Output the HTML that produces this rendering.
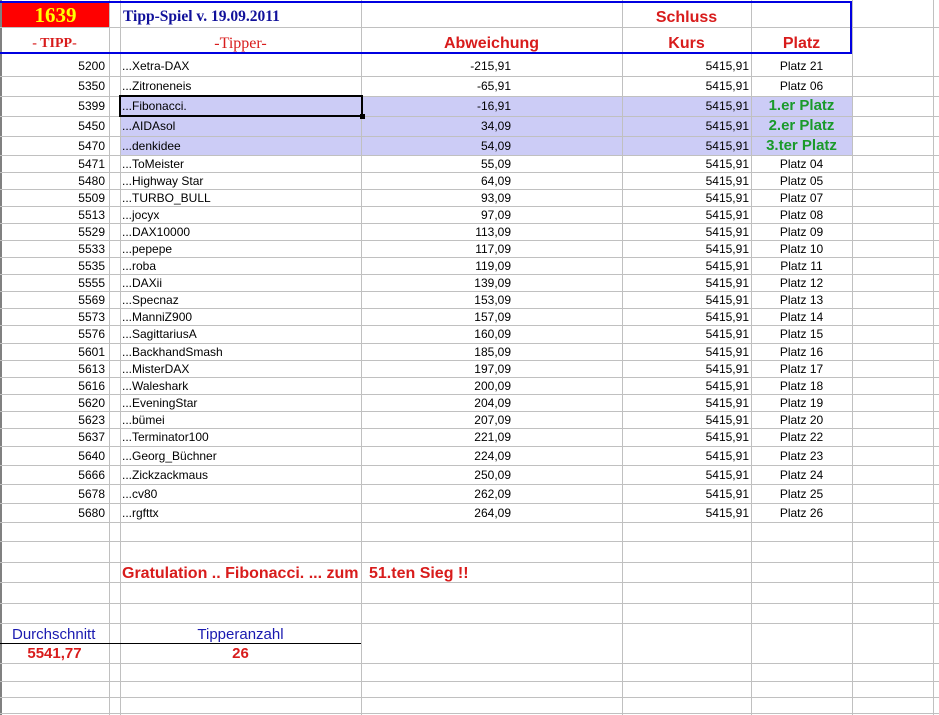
<!DOCTYPE html>
<html><head><meta charset="utf-8"><style>
body{margin:0;width:939px;height:715px;overflow:hidden;background:#fff;position:relative;font-family:"Liberation Sans",Arial,sans-serif;font-size:12px;color:#000}
.v{position:absolute;top:0;height:715px;width:1px;background:#c0c0c0}
.h{position:absolute;left:0;width:939px;height:1px;background:#c0c0c0}
.t{position:absolute;white-space:nowrap}
.a{text-align:right;width:105px;left:0}
.n{left:122px}
.d{text-align:right;width:100px;left:411px}
.k{text-align:right;width:100px;left:649px}
.p{text-align:center;width:101px;left:751px}
.g{color:#1a9a2a;font-weight:bold;font-size:15px}
.red{color:#d81c1c;font-weight:bold}
</style></head><body>
<div style="position:absolute;left:120px;top:96px;width:732px;height:59px;background:#ccccf6"></div>
<div class="v" style="left:109px"></div><div class="v" style="left:120px"></div><div class="v" style="left:361px"></div><div class="v" style="left:622px"></div><div class="v" style="left:751px"></div><div class="v" style="left:852px"></div><div class="v" style="left:933px"></div>
<div style="position:absolute;left:0;top:0;width:2px;height:715px;background:#808080"></div>
<div class="h" style="top:27px"></div>
<div class="h" style="top:76px"></div><div class="h" style="top:96px"></div><div class="h" style="top:116px"></div><div class="h" style="top:136px"></div><div class="h" style="top:155px"></div><div class="h" style="top:172px"></div><div class="h" style="top:189px"></div><div class="h" style="top:206px"></div><div class="h" style="top:223px"></div><div class="h" style="top:240px"></div><div class="h" style="top:257px"></div><div class="h" style="top:274px"></div><div class="h" style="top:291px"></div><div class="h" style="top:308px"></div><div class="h" style="top:325px"></div><div class="h" style="top:343px"></div><div class="h" style="top:360px"></div><div class="h" style="top:377px"></div><div class="h" style="top:394px"></div><div class="h" style="top:411px"></div><div class="h" style="top:428px"></div><div class="h" style="top:446px"></div><div class="h" style="top:465px"></div><div class="h" style="top:484px"></div><div class="h" style="top:503px"></div><div class="h" style="top:522px"></div><div class="h" style="top:541px"></div><div class="h" style="top:562px"></div><div class="h" style="top:582px"></div><div class="h" style="top:603px"></div><div class="h" style="top:623px"></div><div class="h" style="top:663px"></div><div class="h" style="top:681px"></div><div class="h" style="top:697px"></div><div class="h" style="top:713px"></div>
<div style="position:absolute;left:0;top:643px;width:361px;height:1px;background:#000"></div>
<div style="position:absolute;left:2px;top:2px;width:107px;height:25px;background:#f00"></div>
<div style="position:absolute;left:0;top:1px;width:850px;height:49px;border:2px solid #0000e0;border-left:none"></div>
<div class="t" style="left:2px;top:3px;width:107px;text-align:center;font-family:'Liberation Serif',serif;font-weight:bold;font-size:21px;color:#ffff00">1639</div>
<div class="t" style="left:123px;top:8px;font-family:'Liberation Serif',serif;font-weight:bold;font-size:15.5px;color:#10109a">Tipp-Spiel v. 19.09.2011</div>
<div class="t red" style="left:622px;top:9px;width:129px;text-align:center;font-size:16px">Schluss</div>
<div class="t" style="left:0;top:36px;width:109px;text-align:center;font-family:'Liberation Serif',serif;font-weight:bold;font-size:14px;color:#d81c1c">- TIPP-</div>
<div class="t" style="left:120px;top:35px;width:241px;text-align:center;font-family:'Liberation Serif',serif;font-size:16px;color:#d81c1c">-Tipper-</div>
<div class="t red" style="left:361px;top:35px;width:261px;text-align:center;font-size:16px">Abweichung</div>
<div class="t red" style="left:622px;top:35px;width:129px;text-align:center;font-size:16px">Kurs</div>
<div class="t red" style="left:751px;top:35px;width:101px;text-align:center;font-size:16px">Platz</div>

<div class="t a" style="top:59px">5200</div><div class="t n" style="top:59px">...Xetra-DAX</div><div class="t d" style="top:59px">-215,91</div><div class="t k" style="top:59px">5415,91</div><div class="t p" style="top:59px">Platz 21</div>
<div class="t a" style="top:79px">5350</div><div class="t n" style="top:79px">...Zitroneneis</div><div class="t d" style="top:79px">-65,91</div><div class="t k" style="top:79px">5415,91</div><div class="t p" style="top:79px">Platz 06</div>
<div class="t a" style="top:99px">5399</div><div class="t n" style="top:99px">...Fibonacci.</div><div class="t d" style="top:99px">-16,91</div><div class="t k" style="top:99px">5415,91</div><div class="t p g" style="top:97px">1.er Platz</div>
<div class="t a" style="top:119px">5450</div><div class="t n" style="top:119px">...AIDAsol</div><div class="t d" style="top:119px">34,09</div><div class="t k" style="top:119px">5415,91</div><div class="t p g" style="top:117px">2.er Platz</div>
<div class="t a" style="top:139px">5470</div><div class="t n" style="top:139px">...denkidee</div><div class="t d" style="top:139px">54,09</div><div class="t k" style="top:139px">5415,91</div><div class="t p g" style="top:137px">3.ter Platz</div>
<div style="position:absolute;left:119px;top:95px;width:240px;height:18px;border:2px solid #000"></div>
<div style="position:absolute;left:360px;top:114px;width:5px;height:5px;background:#000"></div>

<div class="t a" style="top:157px">5471</div><div class="t n" style="top:157px">...ToMeister</div><div class="t d" style="top:157px">55,09</div><div class="t k" style="top:157px">5415,91</div><div class="t p" style="top:157px">Platz 04</div>
<div class="t a" style="top:174px">5480</div><div class="t n" style="top:174px">...Highway Star</div><div class="t d" style="top:174px">64,09</div><div class="t k" style="top:174px">5415,91</div><div class="t p" style="top:174px">Platz 05</div>
<div class="t a" style="top:191px">5509</div><div class="t n" style="top:191px">...TURBO_BULL</div><div class="t d" style="top:191px">93,09</div><div class="t k" style="top:191px">5415,91</div><div class="t p" style="top:191px">Platz 07</div>
<div class="t a" style="top:208px">5513</div><div class="t n" style="top:208px">...jocyx</div><div class="t d" style="top:208px">97,09</div><div class="t k" style="top:208px">5415,91</div><div class="t p" style="top:208px">Platz 08</div>
<div class="t a" style="top:225px">5529</div><div class="t n" style="top:225px">...DAX10000</div><div class="t d" style="top:225px">113,09</div><div class="t k" style="top:225px">5415,91</div><div class="t p" style="top:225px">Platz 09</div>
<div class="t a" style="top:242px">5533</div><div class="t n" style="top:242px">...pepepe</div><div class="t d" style="top:242px">117,09</div><div class="t k" style="top:242px">5415,91</div><div class="t p" style="top:242px">Platz 10</div>
<div class="t a" style="top:259px">5535</div><div class="t n" style="top:259px">...roba</div><div class="t d" style="top:259px">119,09</div><div class="t k" style="top:259px">5415,91</div><div class="t p" style="top:259px">Platz 11</div>
<div class="t a" style="top:276px">5555</div><div class="t n" style="top:276px">...DAXii</div><div class="t d" style="top:276px">139,09</div><div class="t k" style="top:276px">5415,91</div><div class="t p" style="top:276px">Platz 12</div>
<div class="t a" style="top:293px">5569</div><div class="t n" style="top:293px">...Specnaz</div><div class="t d" style="top:293px">153,09</div><div class="t k" style="top:293px">5415,91</div><div class="t p" style="top:293px">Platz 13</div>
<div class="t a" style="top:310px">5573</div><div class="t n" style="top:310px">...ManniZ900</div><div class="t d" style="top:310px">157,09</div><div class="t k" style="top:310px">5415,91</div><div class="t p" style="top:310px">Platz 14</div>
<div class="t a" style="top:327px">5576</div><div class="t n" style="top:327px">...SagittariusA</div><div class="t d" style="top:327px">160,09</div><div class="t k" style="top:327px">5415,91</div><div class="t p" style="top:327px">Platz 15</div>
<div class="t a" style="top:345px">5601</div><div class="t n" style="top:345px">...BackhandSmash</div><div class="t d" style="top:345px">185,09</div><div class="t k" style="top:345px">5415,91</div><div class="t p" style="top:345px">Platz 16</div>
<div class="t a" style="top:362px">5613</div><div class="t n" style="top:362px">...MisterDAX</div><div class="t d" style="top:362px">197,09</div><div class="t k" style="top:362px">5415,91</div><div class="t p" style="top:362px">Platz 17</div>
<div class="t a" style="top:379px">5616</div><div class="t n" style="top:379px">...Waleshark</div><div class="t d" style="top:379px">200,09</div><div class="t k" style="top:379px">5415,91</div><div class="t p" style="top:379px">Platz 18</div>
<div class="t a" style="top:396px">5620</div><div class="t n" style="top:396px">...EveningStar</div><div class="t d" style="top:396px">204,09</div><div class="t k" style="top:396px">5415,91</div><div class="t p" style="top:396px">Platz 19</div>
<div class="t a" style="top:413px">5623</div><div class="t n" style="top:413px">...bümei</div><div class="t d" style="top:413px">207,09</div><div class="t k" style="top:413px">5415,91</div><div class="t p" style="top:413px">Platz 20</div>
<div class="t a" style="top:430px">5637</div><div class="t n" style="top:430px">...Terminator100</div><div class="t d" style="top:430px">221,09</div><div class="t k" style="top:430px">5415,91</div><div class="t p" style="top:430px">Platz 22</div>
<div class="t a" style="top:449px">5640</div><div class="t n" style="top:449px">...Georg_Büchner</div><div class="t d" style="top:449px">224,09</div><div class="t k" style="top:449px">5415,91</div><div class="t p" style="top:449px">Platz 23</div>
<div class="t a" style="top:468px">5666</div><div class="t n" style="top:468px">...Zickzackmaus</div><div class="t d" style="top:468px">250,09</div><div class="t k" style="top:468px">5415,91</div><div class="t p" style="top:468px">Platz 24</div>
<div class="t a" style="top:487px">5678</div><div class="t n" style="top:487px">...cv80</div><div class="t d" style="top:487px">262,09</div><div class="t k" style="top:487px">5415,91</div><div class="t p" style="top:487px">Platz 25</div>
<div class="t a" style="top:506px">5680</div><div class="t n" style="top:506px">...rgfttx</div><div class="t d" style="top:506px">264,09</div><div class="t k" style="top:506px">5415,91</div><div class="t p" style="top:506px">Platz 26</div>

<div class="t red" style="left:122px;top:565px;font-size:16px">Gratulation .. Fibonacci. ... zum</div>
<div class="t red" style="left:369px;top:565px;font-size:16px">51.ten Sieg !!</div>
<div class="t" style="left:12px;top:626px;font-size:15px;color:#1a1ab0">Durchschnitt</div>
<div class="t" style="left:120px;top:626px;width:241px;text-align:center;font-size:15px;color:#1a1ab0">Tipperanzahl</div>
<div class="t red" style="left:0;top:645px;width:109px;text-align:center;font-size:15px">5541,77</div>
<div class="t red" style="left:120px;top:645px;width:241px;text-align:center;font-size:15px">26</div>
</body></html>
